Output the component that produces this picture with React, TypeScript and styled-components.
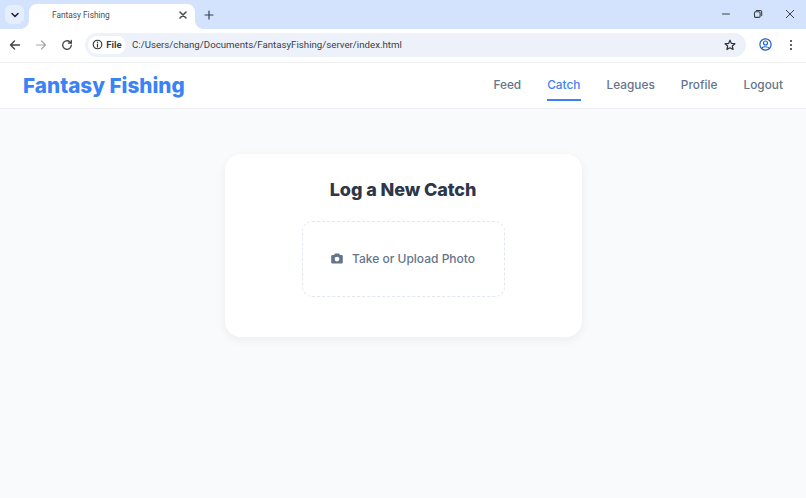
import React from "react";
import styled, { createGlobalStyle } from "styled-components";

const Global = createGlobalStyle`
  html, body { margin: 0; padding: 0; width: 806px; height: 498px; overflow: hidden; background: #f9fafb; }
  * { box-sizing: border-box; }
`;
const Page = styled.div`
  width: 806px; height: 498px; display: flex; flex-direction: column;
  font-family: "Inter", "Liberation Sans", sans-serif;
`;
const TabStrip = styled.div`
  height: 29px; background: #d3e3fd; display: flex; align-items: flex-end; padding-left: 5px;
  font-family: "Roboto", "Liberation Sans", sans-serif;
`;
const TabSearch = styled.div`
  width: 19px; height: 19px; margin: 0 5px 5px 0; border-radius: 6px; background: #e6eefb;
  display: flex; align-items: center; justify-content: center; color: #1f2937;
`;
const Tab = styled.div`
  position: relative; width: 166px; height: 25px; background: #fff; border-radius: 8px 8px 0 0;
  display: flex; align-items: center; padding: 0 7px 4px 23px; color: #4a4e54;
  font-size: 8.3px; line-height: 12px;
  &::before, &::after { content: ""; position: absolute; bottom: 0; width: 8px; height: 8px; background: radial-gradient(circle at var(--cx) 0, #d3e3fd 7.5px, #fff 8px); }
  &::before { left: -8px; --cx: 0; }
  &::after { right: -8px; --cx: 100%; }
`;
const TabTitle = styled.span`flex: 1;`;
const IconSlot = styled.span`
  display: flex; align-items: center; justify-content: center; flex: none;
`;
const NewTab = styled(IconSlot)`margin: 0 0 8px 8px; width: 12px; height: 12px; color: #374151;`;
const WindowControls = styled.div`
  margin-left: auto; display: flex; align-items: center; height: 29px; color: #3c4043; padding-bottom: 2px;
`;
const WindowButton = styled(IconSlot)`width: 32px; height: 14px;`;
const Toolbar = styled.div`
  height: 34px; background: #fff; border-bottom: 1px solid #eef0f2; display: flex; align-items: center; padding: 0 7px 2px 7px; color: #3c4043;
  font-family: "Roboto", "Liberation Sans", sans-serif;
`;
const NavIcon = styled(IconSlot)<{ $dim?: boolean }>`
  width: 16px; height: 16px; margin-right: 10px; color: ${p => (p.$dim ? "#a3a8ad" : "#3f4348")};
`;
const Omnibox = styled.div`
  width: 661px; height: 24px; border-radius: 12px; background: #edf2fa; display: flex; align-items: center; padding: 0 10px 0 3px;
`;
const Chip = styled.div`
  height: 18px; width: 38px; border-radius: 9px; background: #fff; display: flex; align-items: center; justify-content: center; gap: 3px;
  font-size: 9.5px; font-weight: 600; color: #2f3337; margin-right: 6px;
`;
const Url = styled.span`flex: 1; font-size: 9.7px; color: #3a3e43; white-space: nowrap;`;
const ProfileIcon = styled(IconSlot)`width: 16px; height: 16px; margin-left: 11px; color: #1f5fc9;`;
const MenuIcon = styled(IconSlot)`width: 16px; height: 16px; margin-left: 10px; color: #3c4043;`;
const Header = styled.header`
  height: 46px; background: #fff; border-bottom: 1px solid #eceef1; display: flex; align-items: center; justify-content: space-between; padding: 0 23px;
`;
const Logo = styled.div`
  font-size: 20.7px; font-weight: 800; color: #3b82f6; margin-top: -1px;
`;
const Nav = styled.nav`display: flex; gap: 26px;`;
const NavLink = styled.a<{ $active?: boolean }>`
  font-size: 11.8px; line-height: 18px; font-weight: 500; letter-spacing: 0.03px; color: ${p => (p.$active ? "#3b82f6" : "#64748b")}; padding: 0 0 5px; margin-top: 5px; border-bottom: 2px solid ${p => (p.$active ? "#3b82f6" : "transparent")};
`;
const Main = styled.main`
  flex: 1; background: #f9fafb; display: flex; justify-content: center; align-items: flex-start; padding-top: 45px;
`;
const Card = styled.section`
  width: 357px; height: 183px; background: #fff; border-radius: 16px; box-shadow: 0 3px 10px rgba(30, 41, 59, 0.06);
  display: flex; flex-direction: column; align-items: center; padding-top: 24px;
`;
const Title = styled.h1`
  margin: 0; font-size: 18px; line-height: 24px; font-weight: 800; color: #2d3748; letter-spacing: -0.1px;
`;
const Drop = styled.div`
  margin-top: 19px; width: 203px; height: 76px; border: 1px dashed #e2e8f0; border-radius: 10px; display: flex; align-items: center; justify-content: center; gap: 9px; color: #64748b; font-size: 12px; font-weight: 500; padding-bottom: 1px;
`;
const Stroke = { fill: "none", stroke: "currentColor", strokeLinecap: "round", strokeLinejoin: "round" } as const;

export default function App() {
  return (
    <Page>
      <Global />
      <TabStrip>
        <TabSearch>
          <svg width="10" height="10" viewBox="0 0 10 10"><path d="M2 3.5 5 6.5 8 3.5" {...Stroke} strokeWidth="1.6" /></svg>
        </TabSearch>
        <Tab>
          <TabTitle>Fantasy Fishing</TabTitle>
          <IconSlot>
            <svg width="10" height="10" viewBox="0 0 10 10"><path d="M2 2 8 8M8 2 2 8" {...Stroke} strokeWidth="1.6" /></svg>
          </IconSlot>
        </Tab>
        <NewTab>
          <svg width="10" height="10" viewBox="0 0 10 10"><path d="M5 1V9M1 5H9" {...Stroke} strokeWidth="1.2" /></svg>
        </NewTab>
        <WindowControls>
          <WindowButton><svg width="10" height="10" viewBox="0 0 10 10"><path d="M1.5 5H8.5" {...Stroke} strokeWidth="1" /></svg></WindowButton>
          <WindowButton><svg width="10" height="10" viewBox="0 0 10 10"><rect x="1.5" y="2.8" width="5.6" height="5.6" rx="1.2" {...Stroke} strokeWidth="1.1" /><path d="M3.3 1.5H7.2A1.5 1.5 0 0 1 8.7 3V6.6" {...Stroke} strokeWidth="1.1" /></svg></WindowButton>
          <WindowButton><svg width="10" height="10" viewBox="0 0 10 10"><path d="M1.3 1.3 8.7 8.7M8.7 1.3 1.3 8.7" {...Stroke} strokeWidth="1" /></svg></WindowButton>
        </WindowControls>
      </TabStrip>
      <Toolbar>
        <NavIcon>
          <svg width="12" height="12" viewBox="0 0 12 12"><path d="M10.5 6H1.5M5.5 2 1.5 6 5.5 10" {...Stroke} strokeWidth="1.4" /></svg>
        </NavIcon>
        <NavIcon $dim>
          <svg width="12" height="12" viewBox="0 0 12 12"><path d="M1.5 6H10.5M6.5 2 10.5 6 6.5 10" {...Stroke} strokeWidth="1.2" /></svg>
        </NavIcon>
        <NavIcon>
          <svg width="12" height="12" viewBox="0 0 12 12"><path d="M10.3 6.2A4.3 4.3 0 1 1 8.9 2.9L10.3 4.2M10.3 1.4V4.2H7.5" {...Stroke} strokeWidth="1.3" /></svg>
        </NavIcon>
        <Omnibox>
          <Chip>
            <svg width="11" height="11" viewBox="0 0 11 11"><circle cx="5.5" cy="5.5" r="4.3" {...Stroke} strokeWidth="1.1" /><path d="M5.5 5V8" {...Stroke} strokeWidth="1.2" /><circle cx="5.5" cy="3.3" r=".7" fill="currentColor" /></svg>
            File
          </Chip>
          <Url>C:/Users/chang/Documents/FantasyFishing/server/index.html</Url>
          <svg width="12" height="12" viewBox="0 0 12 12"><path d="M6 1.2 7.4 4.4 10.9 4.7 8.3 7 9.1 10.5 6 8.7 2.9 10.5 3.7 7 1.1 4.7 4.6 4.4Z" fill="none" stroke="#2f3337" strokeWidth="1.2" strokeLinejoin="round" /></svg>
        </Omnibox>
        <ProfileIcon>
          <svg width="13" height="13" viewBox="0 0 13 13"><circle cx="6.5" cy="6.5" r="5.6" {...Stroke} strokeWidth="1.2" /><circle cx="6.5" cy="5" r="2" {...Stroke} strokeWidth="1.1" /><path d="M2.8 10.2C4 8.3 9 8.3 10.2 10.2" {...Stroke} strokeWidth="1.1" /></svg>
        </ProfileIcon>
        <MenuIcon>
          <svg width="4" height="12" viewBox="0 0 4 12"><circle cx="2" cy="2" r="1.1" fill="currentColor" /><circle cx="2" cy="6" r="1.1" fill="currentColor" /><circle cx="2" cy="10" r="1.1" fill="currentColor" /></svg>
        </MenuIcon>
      </Toolbar>
      <Header>
        <Logo>Fantasy Fishing</Logo>
        <Nav>
          <NavLink>Feed</NavLink>
          <NavLink $active>Catch</NavLink>
          <NavLink>Leagues</NavLink>
          <NavLink>Profile</NavLink>
          <NavLink>Logout</NavLink>
        </Nav>
      </Header>
      <Main>
        <Card>
          <Title>Log a New Catch</Title>
          <Drop>
            <svg width="12" height="11" viewBox="0 0 12 11"><path fillRule="evenodd" fill="currentColor" d="M4 .5H8L9 2H10.6A1.2 1.2 0 0 1 11.8 3.2V9.3A1.2 1.2 0 0 1 10.6 10.5H1.4A1.2 1.2 0 0 1 .2 9.3V3.2A1.2 1.2 0 0 1 1.4 2H3ZM6 3.7A2.4 2.4 0 1 0 6 8.5 2.4 2.4 0 1 0 6 3.7Z" /></svg>
            <span>Take or Upload Photo</span>
          </Drop>
        </Card>
      </Main>
    </Page>
  );
}
